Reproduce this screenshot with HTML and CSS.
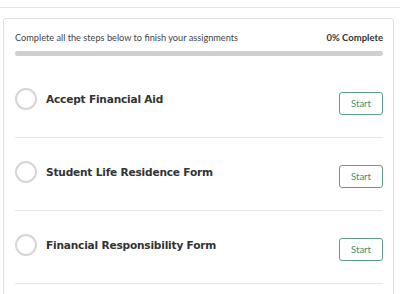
FILE: index.html
```html
<!DOCTYPE html>
<html lang="en">

<head>
    <meta charset="UTF-8">
    <meta name="viewport" content="width=device-width, initial-scale=1.0">
    <title>Assignments</title>
    <link rel="stylesheet" href="styles.css">
</head>

<body>
    <div class="top-bar"></div>

    <div class="card">
        <div class="card-header">
            <div class="summary">
                <span class="summary-text">Complete all the steps below to finish your assignments</span>
                <span class="summary-percent">0% Complete</span>
            </div>
            <div class="progress">
                <div class="progress-fill" style="width: 0%"></div>
            </div>
        </div>

        <div class="step">
            <div class="step-info">
                <span class="step-check"></span>
                <span class="step-title">Accept Financial Aid</span>
            </div>
            <button class="start-btn">Start</button>
        </div>

        <div class="step">
            <div class="step-info">
                <span class="step-check"></span>
                <span class="step-title">Student Life Residence Form</span>
            </div>
            <button class="start-btn">Start</button>
        </div>

        <div class="step">
            <div class="step-info">
                <span class="step-check"></span>
                <span class="step-title">Financial Responsibility Form</span>
            </div>
            <button class="start-btn">Start</button>
        </div>
    </div>
</body>

</html>
```

FILE: styles.css
```css
* {
    margin: 0;
    padding: 0;
    box-sizing: border-box;
}

body {
    background-color: #fff;
    font-family: Lato, "Open Sans", sans-serif;
    color: #333;
}

.top-bar {
    height: 8px;
    border-bottom: 1px solid #e6e6e6;
}

.card {
    width: 391px;
    margin: 10px 0 0 3px;
    border: 1px solid #e0e0e0;
    border-radius: 3px;
    padding: 0 10px 40px 11px;
}

.card-header {
    padding-top: 13px;
    padding-bottom: 9px;
}

.summary {
    display: flex;
    justify-content: space-between;
    align-items: baseline;
    font-size: 9.2px;
    line-height: 12px;
    color: #444;
}

.summary-percent {
    font-weight: bold;
    font-size: 9.5px;
    color: #333;
}

.progress {
    height: 5px;
    margin-top: 7px;
    background-color: #cfcfcf;
    border-radius: 3px;
    overflow: hidden;
}

.progress-fill {
    height: 100%;
    background-color: #3d8f6f;
}

.step {
    display: flex;
    justify-content: space-between;
    align-items: flex-start;
    padding: 23px 0 22px;
    border-bottom: 1px solid #e6e6e6;
}

.step-info {
    display: flex;
    align-items: center;
    gap: 9px;
}

.step-check {
    width: 22px;
    height: 22px;
    border: 2px solid #d6d6d6;
    border-radius: 50%;
}

.step-title {
    font-family: "DejaVu Sans", sans-serif;
    font-weight: bold;
    font-size: 10.6px;
    letter-spacing: -0.2px;
    color: #333;
}

.start-btn {
    width: 44px;
    height: 23px;
    margin-top: 4px;
    background-color: #fff;
    border: 1px solid #5f9f88;
    border-radius: 3px;
    color: #3d8f6f;
    font-family: Lato, sans-serif;
    font-size: 9.5px;
    cursor: pointer;
}
```
